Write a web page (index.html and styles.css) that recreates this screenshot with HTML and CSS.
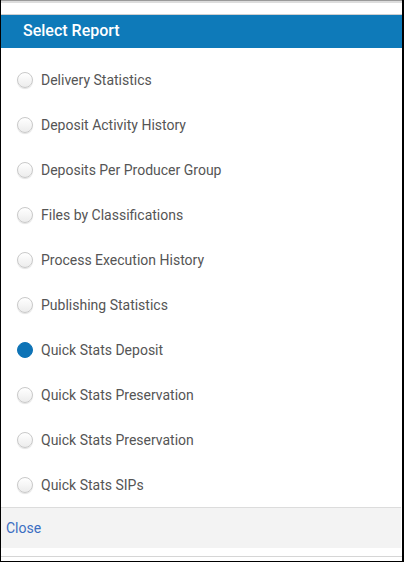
FILE: index.html
```
<!DOCTYPE html>
<html lang="en">
<head>
  <meta charset="UTF-8">
  <title>Select Report</title>
  <link rel="stylesheet" href="styles.css">
</head>
<body>
  <div class="dialog">
    <div class="top-strip"></div>
    <div class="dialog-header">Select Report</div>

    <form class="report-list">
      <label class="report"><input type="radio" name="report"><span class="dot"></span>Delivery Statistics</label>
      <label class="report"><input type="radio" name="report"><span class="dot"></span>Deposit Activity History</label>
      <label class="report"><input type="radio" name="report"><span class="dot"></span>Deposits Per Producer Group</label>
      <label class="report"><input type="radio" name="report"><span class="dot"></span>Files by Classifications</label>
      <label class="report"><input type="radio" name="report"><span class="dot"></span>Process Execution History</label>
      <label class="report"><input type="radio" name="report"><span class="dot"></span>Publishing Statistics</label>
      <label class="report"><input type="radio" name="report" checked><span class="dot"></span>Quick Stats Deposit</label>
      <label class="report"><input type="radio" name="report"><span class="dot"></span>Quick Stats Preservation</label>
      <label class="report"><input type="radio" name="report"><span class="dot"></span>Quick Stats Preservation</label>
      <label class="report"><input type="radio" name="report"><span class="dot"></span>Quick Stats SIPs</label>
    </form>

    <div class="dialog-footer">
      <a href="#" class="close-link">Close</a>
    </div>
    <div class="bottom-strip"></div>
  </div>
</body>
</html>
```

FILE: styles.css
```
html, body {
  margin: 0;
  padding: 0;
}
body {
  font-family: Roboto, "Noto Sans", Arial, sans-serif;
  background: #fff;
  color: #555;
}
.dialog {
  width: 401px;
  height: 561px;
  border-left: 1px solid #000;
  border-right: 2px solid #000;
  border-bottom: 1px solid #000;
  display: flex;
  flex-direction: column;
}
.top-strip {
  border-top: 1px solid #9a9a9a;
  background: linear-gradient(#ddd 0, #ddd 2px, #fff 2px);
  border-bottom: 1px solid #cfcfcf;
  box-sizing: border-box;
  height: 15px;
}
.dialog-header {
  background: #0e7ab9;
  color: #fff;
  height: 33px;
  line-height: 32px;
  padding-left: 22px;
  font-size: 16px;
  font-weight: 500;
}
.report-list {
  padding: 9px 0 1px;
  margin: 0;
}
.report {
  display: flex;
  align-items: center;
  height: 45px;
  padding-left: 16px;
  font-size: 14px;
  color: #555;
  cursor: pointer;
}
.report input {
  display: none;
}
.dot {
  width: 14px;
  height: 14px;
  border-radius: 50%;
  border: 1px solid #c9c9c9;
  background: linear-gradient(#fff, #ececec);
  box-shadow: 0 1px 1px rgba(0, 0, 0, 0.12);
  margin-right: 8px;
  flex: none;
}
.report input:checked + .dot {
  background: #0e73b6;
  border-color: #0e73b6;
  box-shadow: none;
}
.dialog-footer {
  border-top: 1px solid #dcdcdc;
  background: #f3f3f3;
  height: 40px;
  margin-right: 1px;
  display: flex;
  align-items: center;
  padding-left: 5px;
  margin-top: -1px;
}
.close-link {
  color: #3b6ec2;
  text-decoration: none;
  font-size: 14px;
}
.bottom-strip {
  flex: 1;
  border-bottom: 1px solid #d6d6d6;
  margin-bottom: 4px;
}
```
